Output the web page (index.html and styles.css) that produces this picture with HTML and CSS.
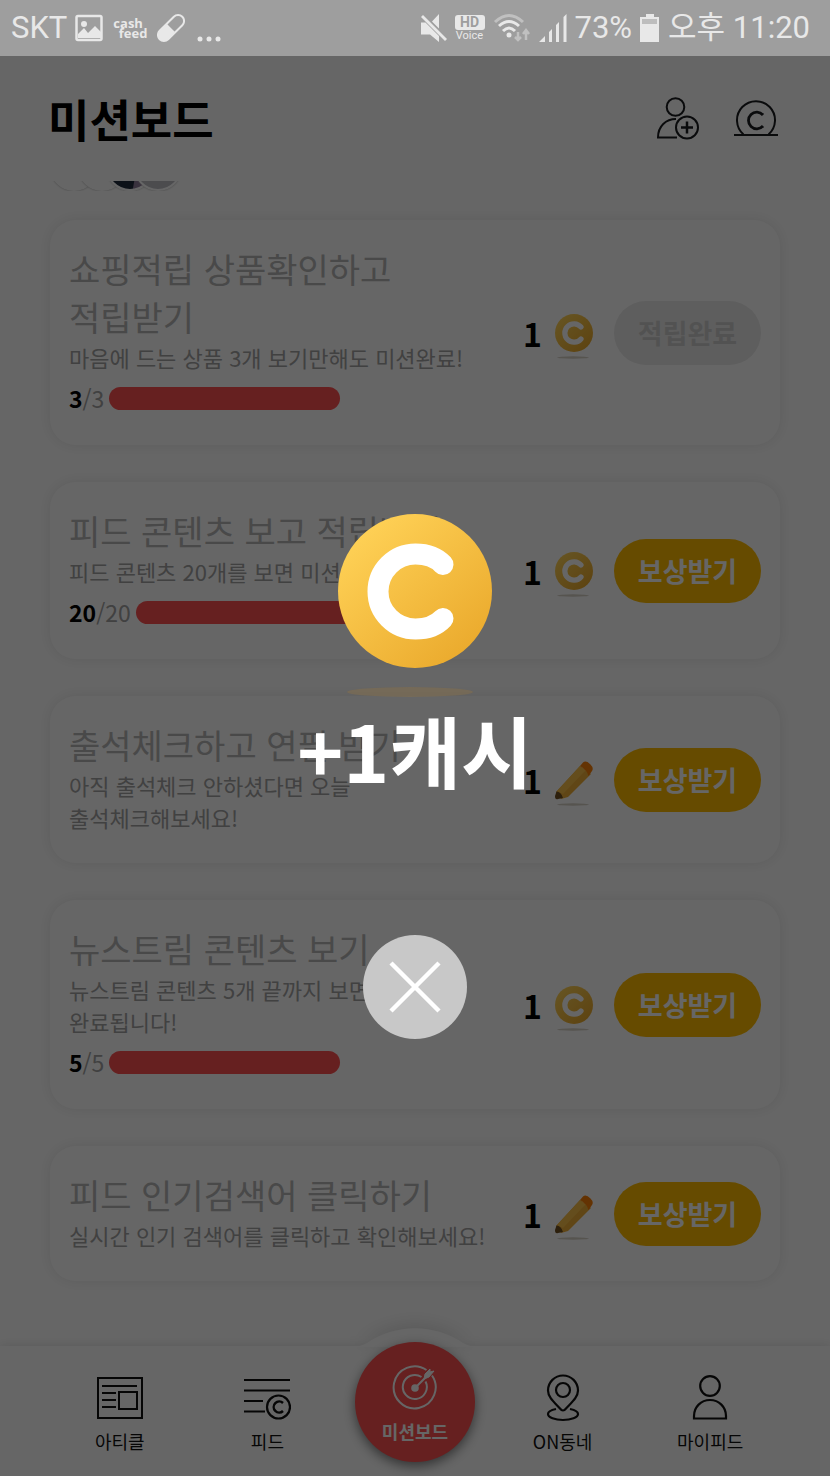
FILE: index.html
```html
<!DOCTYPE html>
<html lang="ko">
<head>
<meta charset="utf-8">
<meta name="viewport" content="width=device-width, initial-scale=1">
<title>미션보드</title>
<link rel="stylesheet" href="styles.css">
</head>
<body>
<svg class="defs" aria-hidden="true">
  <defs>
    <linearGradient id="gold" x1="0.1" y1="0.1" x2="0.85" y2="0.95"><stop offset="0" stop-color="#ffd257"/><stop offset="1" stop-color="#eaa92c"/></linearGradient>
    <symbol id="coin" viewBox="0 0 38 52">
      <circle cx="19" cy="26" r="19" fill="url(#gold)"/>
      <path d="M26 20A9.200 9.200 0 1 0 26 32" fill="none" stroke="#fff" stroke-width="5.200" stroke-linecap="round"/>
      <ellipse cx="18" cy="50.500" rx="16" ry="1.200" fill="#8c7a5c" opacity=".35"/>
    </symbol>
    <symbol id="pencil" viewBox="0 0 38 52">
      <path d="M1 38 25 12 36 20 13 43 6 45Z" fill="#f0ae38"/>
      <path d="M2 37 25 12 31 16 8 40Z" fill="#f9c04a"/>
      <path d="M25 12 28 8.500Q31 6 35.500 10.500 39 14 37 17L33.500 22Q32 16 25 12Z" fill="#fb8008"/>
      <path d="M1.500 37.500Q6 37.500 8 44L3 45Q0 46 0 42Z" fill="#705022"/>
      <ellipse cx="18" cy="50.500" rx="16" ry="1.200" fill="#8c7a5c" opacity=".35"/>
    </symbol>
  </defs>
</svg>

<div class="status">
  <div class="status-group">
    <span class="carrier">SKT</span>
    <svg width="28" height="28" viewBox="0 0 28 28"><rect x="1.500" y="2" width="25" height="24" rx="1.500" fill="none" stroke="#e8e8e8" stroke-width="2.500"/><circle cx="9" cy="10" r="3" fill="#e8e8e8"/><path d="M3 24V20L9 14 13 19 20 12 26 18V24Z" fill="#e8e8e8"/></svg>
    <span class="cashfeed"><span>cash</span><span>feed</span></span>
    <svg width="28" height="30" viewBox="0 0 28 30"><g transform="rotate(45 14 15)"><rect x="8" y="-1" width="12" height="32" rx="6" fill="none" stroke="#e8e8e8" stroke-width="2"/><path d="M8 15H20V25A6 6 0 0 1 8 25Z" fill="#e8e8e8"/></g></svg>
    <svg class="dots" width="24" height="28" viewBox="0 0 24 28"><g fill="#e8e8e8"><circle cx="3" cy="25" r="2.500"/><circle cx="12" cy="25" r="2.500"/><circle cx="21" cy="25" r="2.500"/></g></svg>
  </div>
  <div class="status-group">
    <svg width="26" height="28" viewBox="0 0 26 28"><path d="M0 8.500H4.500L18 22V28L9 20.500H0ZM11 7.500 18 0V14.500Z" fill="#e8e8e8"/><path d="M1 2 25 26" stroke="#e8e8e8" stroke-width="2.800"/></svg>
    <span class="hd"><b>HD</b><span>Voice</span></span>
    <svg width="38" height="30" viewBox="0 0 38 30" fill="none" stroke-width="3"><path d="M2 9Q16-4 30 9" stroke="#c0c0c0"/><path d="M6 13Q16 4 26 13M10 18Q16 12 22 18" stroke="#e8e8e8"/><circle cx="16" cy="22" r="2.500" fill="#e8e8e8"/><path d="M25 19V27M22 24 25 27 28 24M33 27V18M30 21 33 17 36 21" stroke="#c0c0c0" stroke-width="2.500"/></svg>
    <svg width="28" height="28" viewBox="0 0 28 28" fill="#e8e8e8"><path d="M0 28 6 22V28ZM10 18 13 15V28H10ZM17 11 20 8V28H17ZM24.500 3 27.500 0V28H24.500Z"/></svg>
    <span class="status-text">73%</span>
    <svg width="20" height="30" viewBox="0 0 20 30"><path d="M6 1H14V4H19V29H0V4H6Z" fill="#e8e8e8"/><path d="M2 6H17V11H2Z" fill="#bdbdbd"/></svg>
    <span class="status-text">오후 11:20</span>
  </div>
</div>

<div class="app">
  <header class="header">
    <h1>미션보드</h1>
    <div class="header-actions">
      <button type="button" aria-label="친구 초대"><svg width="44" height="44" viewBox="0 0 44 44" fill="none" stroke="#1b1c20" stroke-width="2"><circle cx="19.500" cy="10" r="8.800"/><path d="M20 22C10 22 2 29 2 40.500H21"/><circle cx="31" cy="30.500" r="11"/><path d="M31 24.500V36.500M25 30.500H37" stroke-width="2.500"/></svg></button>
      <button type="button" aria-label="내 캐시"><svg width="44" height="44" viewBox="0 0 44 44" fill="none" stroke="#1b1c20" stroke-width="2"><path d="M9.500 37.500A19 19 0 1 1 34.500 37.500"/><path d="M0 38H44"/><path d="M29 18A8.300 8.300 0 1 0 29 29" stroke-width="2.800"/></svg></button>
    </div>
  </header>

  <main class="board">
    <div class="avatars"><i></i><i></i><i class="photo"></i><i class="plain"></i></div>
    <section class="cards">
      <article class="card">
        <div class="info">
          <h2>쇼핑적립 상품확인하고<br>적립받기</h2>
          <p>마음에 드는 상품 3개 보기만해도 미션완료!</p>
          <div class="progress"><span><b>3</b>/3</span><span class="bar"></span></div>
        </div>
        <b class="amount">1</b><svg class="prize"><use href="#coin"/></svg>
        <button type="button" class="claim" disabled>적립완료</button>
      </article>
      <article class="card">
        <div class="info">
          <h2>피드 콘텐츠 보고 적립받기</h2>
          <p>피드 콘텐츠 20개를 보면 미션완료!</p>
          <div class="progress"><span><b>20</b>/20</span><span class="bar"></span></div>
        </div>
        <b class="amount">1</b><svg class="prize"><use href="#coin"/></svg>
        <button type="button" class="claim">보상받기</button>
      </article>
      <article class="card">
        <div class="info">
          <h2>출석체크하고 연필 받기</h2>
          <p>아직 출석체크 안하셨다면 오늘<br>출석체크해보세요!</p>
        </div>
        <b class="amount">1</b><svg class="prize"><use href="#pencil"/></svg>
        <button type="button" class="claim">보상받기</button>
      </article>
      <article class="card">
        <div class="info">
          <h2>뉴스트림 콘텐츠 보기</h2>
          <p>뉴스트림 콘텐츠 5개 끝까지 보면 미션이<br>완료됩니다!</p>
          <div class="progress"><span><b>5</b>/5</span><span class="bar"></span></div>
        </div>
        <b class="amount">1</b><svg class="prize"><use href="#coin"/></svg>
        <button type="button" class="claim">보상받기</button>
      </article>
      <article class="card">
        <div class="info">
          <h2>피드 인기검색어 클릭하기</h2>
          <p>실시간 인기 검색어를 클릭하고 확인해보세요!</p>
        </div>
        <b class="amount">1</b><svg class="prize"><use href="#pencil"/></svg>
        <button type="button" class="claim">보상받기</button>
      </article>
    </section>
  </main>

  <nav class="tabs">
    <svg class="hump" width="130" height="19" viewBox="0 0 130 19"><path d="M0 19Q10 19 17 15A85 85 0 0 1 113 15Q120 19 130 19Z" fill="#fff"/></svg>
    <a href="#article"><svg width="48" height="48" viewBox="0 0 48 48" fill="none" stroke="#111" stroke-width="2"><path d="M2 4H46V44H2ZM6 12H41M6 19H20M6 26H20M6 33H20M23 18H41V35H23Z"/></svg>아티클</a>
    <a href="#feed"><svg width="48" height="48" viewBox="0 0 48 48" fill="none" stroke="#111" stroke-width="2.200"><path d="M1 6H47M1 16.500H47M1 27H20M1 37.500H22"/><circle cx="35.500" cy="33" r="11.500"/><path d="M40 29A5.500 5.500 0 1 0 40 37" stroke-width="2.500"/></svg>피드</a>
    <a href="#mission" class="mission" aria-current="page"><svg width="48" height="48" viewBox="0 0 48 48" fill="none" stroke="#fff" stroke-width="2"><path d="M35.500 8A21 21 0 1 0 41 13.500M30.500 15A12 12 0 1 0 34.500 19.500M24 26 38 12"/><circle cx="24" cy="26" r="3.800" fill="#fff" stroke="none"/><path d="M33 17 34 12 39 7 39 10 43 9 38 15Z" fill="#fff" stroke-width="1"/></svg>미션보드</a>
    <a href="#local"><svg width="48" height="48" viewBox="0 0 48 48" fill="none" stroke="#111" stroke-width="2.200" stroke-linejoin="round"><path d="M24 36.500Q22.500 36.500 21 34.500C15 28 9 23 9 16.500A15 15 0 0 1 39 16.500C39 23 33 28 27 34.500Q25.500 36.500 24 36.500Z"/><circle cx="24" cy="16" r="7"/><path d="M17 35C12 36 9 37.500 9 40 9 43.500 16 46 24 46S39 43.500 39 40C39 37.500 36 36 31 35"/></svg>ON동네</a>
    <a href="#my"><svg width="48" height="48" viewBox="0 0 48 48" fill="none" stroke="#111" stroke-width="2.200"><circle cx="24" cy="12" r="9.800"/><path d="M8 44.500V42C8 33 15 26 24 26S40 33 40 42V44.500Z"/></svg>마이피드</a>
  </nav>

  <div class="overlay" role="dialog" aria-label="캐시 적립">
    <svg class="big-coin" width="154" height="184" viewBox="0 0 154 184">
      <circle cx="77" cy="77" r="77" fill="url(#gold)"/>
      <path d="M105 50.500C98 43 88 40 77.500 40A37.500 37.500 0 0 0 77.500 115C88 115 98 112 105 104.500" fill="none" stroke="#fff" stroke-width="21" stroke-linecap="round"/>
      <ellipse cx="72" cy="178" rx="63" ry="5" fill="#86704c" opacity=".5"/>
    </svg>
    <strong>+1캐시</strong>
    <button type="button" class="close" aria-label="닫기"><svg width="52" height="52" viewBox="0 0 52 52"><path d="M2 2 50 50M50 2 2 50" stroke="#fff" stroke-width="4.500"/></svg></button>
  </div>
</div>
</body>
</html>
```
FILE: styles.css
```css
* { box-sizing: border-box; }
body {
  margin: 0;
  min-height: 100vh;
  display: flex;
  flex-direction: column;
  background: #fff;
  color: #000;
  font-family: "Noto Sans CJK KR", sans-serif;
}
h1, h2, p { margin: 0; font-weight: 400; }
button { border: 0; padding: 0; background: none; font-family: inherit; }
svg { display: block; flex: none; }
.defs { position: absolute; width: 0; height: 0; }

.status {
  height: 56px;
  padding: 0 20px 0 11px;
  display: flex;
  justify-content: space-between;
  align-items: center;
  background: #9e9e9e;
  color: #e8e8e8;
  font-family: Roboto, "Noto Sans CJK KR", sans-serif;
}
.status-group { display: flex; align-items: center; gap: 8px; }
.carrier, .status-text { font-size: 31px; line-height: 40px; white-space: nowrap; }
.cashfeed {
  display: flex;
  flex-direction: column;
  width: 34px;
  margin: 0 2px;
  font: 700 13px/10px "Open Sans", sans-serif;
}
.cashfeed span + span { align-self: flex-end; }
.dots { margin-left: 4px; }
.hd { display: flex; flex-direction: column; align-items: center; font-size: 11px; line-height: 12px; }
.hd b {
  width: 30px;
  border-radius: 3px;
  background: #e8e8e8;
  color: #9e9e9e;
  font-size: 14px;
  line-height: 15px;
  text-align: center;
}

.app { position: relative; flex: 1; display: flex; flex-direction: column; }
.header {
  height: 125px;
  padding: 0 52px 0 48px;
  display: flex;
  justify-content: space-between;
  align-items: center;
}
.header h1 { font-size: 45px; font-weight: 700; line-height: 64px; }
.header-actions { display: flex; gap: 34px; }

.board { flex: 1; padding: 0 50px 65px; }
.avatars {
  height: 10px;
  display: flex;
  align-items: flex-end;
  overflow: hidden;
}
.avatars i {
  flex: none;
  width: 48px;
  height: 48px;
  margin-right: -20px;
  border: 2px solid #fff;
  border-radius: 50%;
  background: #fff;
  box-shadow: 0 0 2px #aaa;
}
.avatars .photo { background: linear-gradient(100deg, #1e2b3c 62%, #8f7d9c 64%); }
.avatars .plain { background: #bdbdc4; }
.cards { margin-top: 29px; display: flex; flex-direction: column; gap: 37px; }
.card {
  display: flex;
  align-items: center;
  padding: 0 19px;
  border-radius: 26px;
  background: #fff;
  box-shadow: 0 0 14px rgba(0, 0, 0, 0.09);
}
.info { flex: 1; min-width: 0; padding: 25px 0 30px; white-space: nowrap; }
.info h2 { color: #b6b6b6; font-size: 34px; line-height: 48px; }
.info p { color: #a2a2a2; font-size: 22px; line-height: 32px; }
.progress {
  margin-top: 8px;
  display: flex;
  align-items: center;
  gap: 5px;
  color: #a2a2a2;
  font-size: 23px;
  line-height: 34px;
}
.progress b { color: #000; }
.bar { width: 231px; height: 23px; border-radius: 12px; background: #ff5050; }
.amount { font-size: 32px; line-height: 48px; margin-right: 13px; }
.prize { width: 38px; height: 52px; margin-right: 21px; }
.claim {
  width: 147px;
  height: 64px;
  margin: 0;
  border-radius: 32px;
  background: #ffbc00;
  color: #fff;
  font-size: 27px;
  font-weight: 700;
  line-height: 40px;
}
.claim:disabled { background: #ebebeb; color: #cecece; }

.tabs {
  position: relative;
  display: grid;
  grid-template-columns: repeat(5, 1fr);
  align-items: end;
  padding: 0 46px 14px;
  background: #fff;
  box-shadow: 0 0 10px rgba(0, 0, 0, 0.12);
}
.hump {
  position: absolute;
  left: 50%;
  top: -18px;
  transform: translateX(-50%);
  filter: drop-shadow(0 -4px 8px rgba(0, 0, 0, 0.12));
}
.tabs a {
  display: flex;
  flex-direction: column;
  align-items: center;
  gap: 7px;
  padding-bottom: 9px;
  color: #111;
  font-size: 18px;
  line-height: 24px;
  text-decoration: none;
}
.tabs .mission {
  position: relative;
  justify-self: center;
  width: 120px;
  height: 120px;
  margin-top: -4px;
  padding-top: 20px;
  gap: 9px;
  border-radius: 50%;
  background: #ff5050;
  box-shadow: 0 4px 12px rgba(0, 0, 0, 0.5);
  color: #fff;
  font-weight: 700;
}

.overlay {
  position: absolute;
  inset: 0;
  display: flex;
  flex-direction: column;
  align-items: center;
  justify-content: center;
  padding-top: 20px;
  background: rgba(0, 0, 0, 0.6);
}
.overlay strong { color: #fff; font-size: 78px; line-height: 102px; }
.close {
  width: 104px;
  height: 104px;
  margin-top: 135px;
  display: flex;
  align-items: center;
  justify-content: center;
  border-radius: 50%;
  background: #c8c8c8;
}
```
